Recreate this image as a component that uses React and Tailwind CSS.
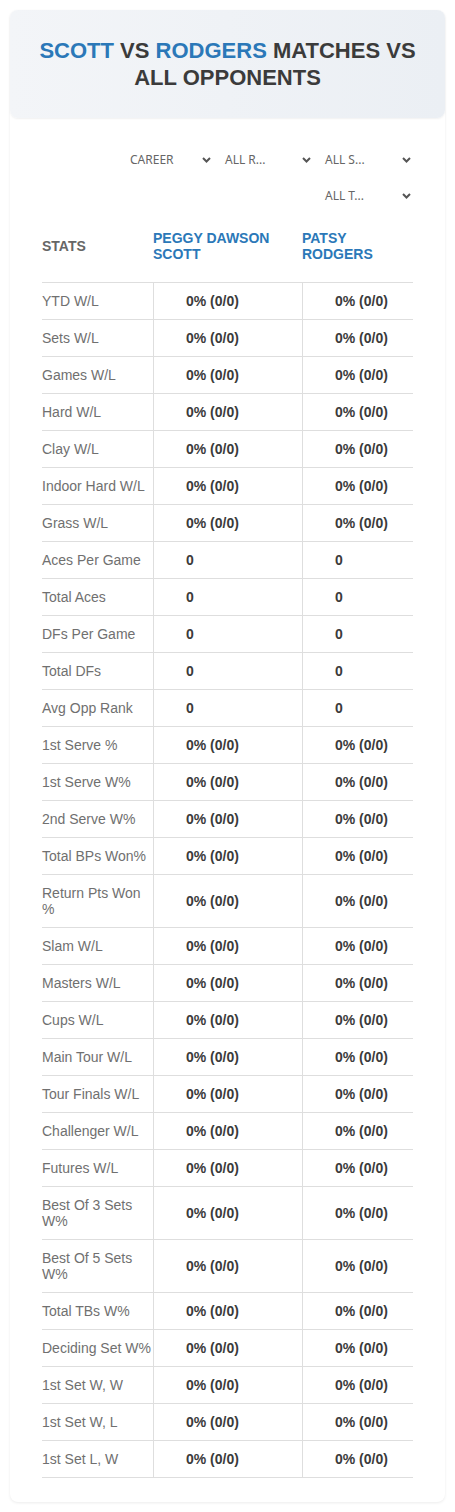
import React from "react";

const rows = [
  ["YTD W/L", "0% (0/0)"],
  ["Sets W/L", "0% (0/0)"],
  ["Games W/L", "0% (0/0)"],
  ["Hard W/L", "0% (0/0)"],
  ["Clay W/L", "0% (0/0)"],
  ["Indoor Hard W/L", "0% (0/0)"],
  ["Grass W/L", "0% (0/0)"],
  ["Aces Per Game", "0"],
  ["Total Aces", "0"],
  ["DFs Per Game", "0"],
  ["Total DFs", "0"],
  ["Avg Opp Rank", "0"],
  ["1st Serve %", "0% (0/0)"],
  ["1st Serve W%", "0% (0/0)"],
  ["2nd Serve W%", "0% (0/0)"],
  ["Total BPs Won%", "0% (0/0)"],
  ["Return Pts Won %", "0% (0/0)"],
  ["Slam W/L", "0% (0/0)"],
  ["Masters W/L", "0% (0/0)"],
  ["Cups W/L", "0% (0/0)"],
  ["Main Tour W/L", "0% (0/0)"],
  ["Tour Finals W/L", "0% (0/0)"],
  ["Challenger W/L", "0% (0/0)"],
  ["Futures W/L", "0% (0/0)"],
  ["Best Of 3 Sets W%", "0% (0/0)"],
  ["Best Of 5 Sets W%", "0% (0/0)"],
  ["Total TBs W%", "0% (0/0)"],
  ["Deciding Set W%", "0% (0/0)"],
  ["1st Set W, W", "0% (0/0)"],
  ["1st Set W, L", "0% (0/0)"],
  ["1st Set L, W", "0% (0/0)"],
];

const Chevron = () => (
  <svg width="9" height="6" viewBox="0 0 9 6" fill="none">
    <polyline points="1,1 4.5,4.5 8,1" stroke="#555" strokeWidth="2" />
  </svg>
);

const Select = ({ label, w }) => (
  <div className={`${w} h-[36px] flex items-center justify-between pl-[10px] pr-[4px] text-[12px] text-[#666] font-[family-name:'Noto_Sans',sans-serif]`}>
    <span>{label}</span>
    <Chevron />
  </div>
);

export default function App() {
  return (
    <div className="w-[455px] bg-white px-[10px] pt-[10px] pb-[10px] font-[family-name:'Liberation_Sans',Arial,sans-serif]">
      <div className="rounded-lg bg-white shadow-[0_1px_3px_rgba(0,0,0,0.08)] pb-[24px]">
        {/* Title */}
        <div className="rounded-lg bg-gradient-to-r from-[#f3f5f8] to-[#ebeff4] shadow-[0_1px_2px_rgba(0,0,0,0.06)] py-[27px] px-[24px] text-center text-[22px] font-bold leading-[27px] text-[#3b3b3b]">
          <span className="text-[#2b78b8]">SCOTT</span> VS{" "}
          <span className="text-[#2b78b8]">RODGERS</span> MATCHES VS ALL OPPONENTS
        </div>

        <div className="px-[32px] pt-[24px]">
          {/* Filters */}
          <div className="flex flex-wrap justify-end mr-[-2px]">
            <Select label="CAREER" w="w-[95px]" />
            <Select label="ALL R..." w="w-[100px]" />
            <Select label="ALL S..." w="w-[100px]" />
            <Select label="ALL T..." w="w-[100px]" />
          </div>

          {/* Table */}
          <div className="mt-[4px] text-[14px] leading-4">
            <div className="grid grid-cols-[111px_149px_111px] border-b border-[#dedede] pt-[12px] pb-[20px] font-bold">
              <div className="flex items-center text-[#666]">STATS</div>
              <div className="text-[#2b78b8] pr-2">PEGGY DAWSON SCOTT</div>
              <div className="text-[#2b78b8]">PATSY RODGERS</div>
            </div>
            {rows.map(([label, val]) => (
              <div key={label} className="grid grid-cols-[111px_149px_111px] border-b border-[#dedede]">
                <div className="py-[10px] text-[#707070]">{label}</div>
                <div className="flex items-center border-l border-[#dedede] pl-[32px] font-bold text-[#3b3b3b]">{val}</div>
                <div className="flex items-center border-l border-[#dedede] pl-[32px] font-bold text-[#3b3b3b]">{val}</div>
              </div>
            ))}
          </div>
        </div>
      </div>
    </div>
  );
}
